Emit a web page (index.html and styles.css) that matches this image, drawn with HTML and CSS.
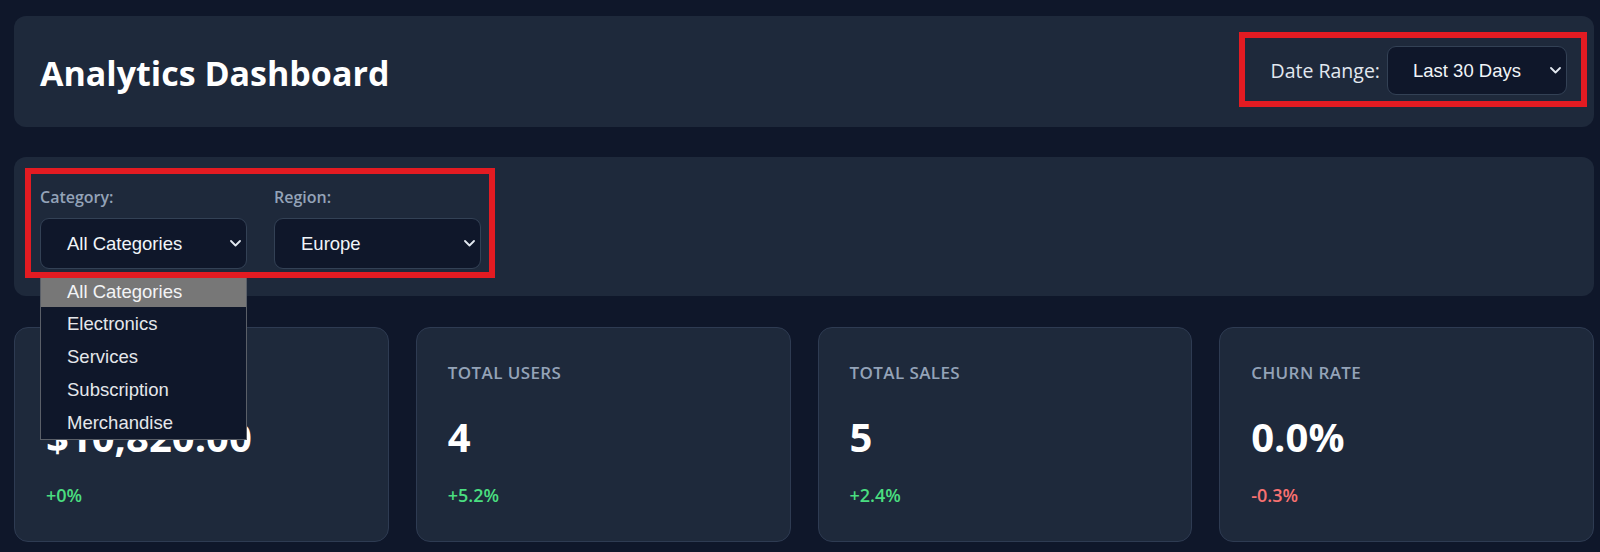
FILE: index.html
```html
<!DOCTYPE html>
<html lang="en">
<head>
<meta charset="utf-8">
<title>Analytics Dashboard</title>
<link rel="stylesheet" href="styles.css">
</head>
<body>
<div class="page">
  <header class="header">
    <h1 class="title">Analytics Dashboard</h1>
    <div class="date-box">
      <span class="date-label">Date Range:</span>
      <div class="select select-date">
        <span>Last 30 Days</span>
        <svg class="chev" width="11" height="7" viewBox="0 0 11 7"><polyline points="1,1 5.5,5.5 10,1" fill="none" stroke="#e2e8f0" stroke-width="1.8" stroke-linecap="round" stroke-linejoin="round"/></svg>
      </div>
    </div>
  </header>

  <section class="filters">
    <div class="filter-box">
      <div class="filter-group">
        <div class="filter-label">Category:</div>
        <div class="select select-filter">
          <span>All Categories</span>
          <svg class="chev" width="11" height="7" viewBox="0 0 11 7"><polyline points="1,1 5.5,5.5 10,1" fill="none" stroke="#e2e8f0" stroke-width="1.8" stroke-linecap="round" stroke-linejoin="round"/></svg>
        </div>
      </div>
      <div class="filter-group">
        <div class="filter-label">Region:</div>
        <div class="select select-filter">
          <span>Europe</span>
          <svg class="chev" width="11" height="7" viewBox="0 0 11 7"><polyline points="1,1 5.5,5.5 10,1" fill="none" stroke="#e2e8f0" stroke-width="1.8" stroke-linecap="round" stroke-linejoin="round"/></svg>
        </div>
      </div>
      <ul class="dropdown">
        <li class="opt opt-first active">All Categories</li>
        <li class="opt">Electronics</li>
        <li class="opt">Services</li>
        <li class="opt">Subscription</li>
        <li class="opt">Merchandise</li>
      </ul>
    </div>
  </section>

  <section class="cards">
    <div class="card">
      <div class="card-label">Total Revenue</div>
      <div class="card-value">$10,820.00</div>
      <div class="card-change up">+0%</div>
    </div>
    <div class="card">
      <div class="card-label">Total Users</div>
      <div class="card-value">4</div>
      <div class="card-change up">+5.2%</div>
    </div>
    <div class="card">
      <div class="card-label">Total Sales</div>
      <div class="card-value">5</div>
      <div class="card-change up">+2.4%</div>
    </div>
    <div class="card">
      <div class="card-label">Churn Rate</div>
      <div class="card-value">0.0%</div>
      <div class="card-change down">-0.3%</div>
    </div>
  </section>
</div>
</body>
</html>
```

FILE: styles.css
```css
* { box-sizing: border-box; }

html, body {
  margin: 0;
  padding: 0;
  background: #0f172a;
}

body {
  font-family: "Open Sans", "Noto Sans", sans-serif;
  color: #f8fafc;
  overflow: hidden;
}

.page {
  padding: 16px 6px 0 14px;
}

.header {
  height: 111px;
  background: #1e293b;
  border-radius: 12px;
  display: flex;
  align-items: center;
  justify-content: space-between;
  padding: 0 7px 0 26px;
}

.title {
  margin: 4px 0 0 0;
  font-size: 34px;
  font-weight: 700;
  color: #ffffff;
  line-height: 1.2;
}

.date-box {
  display: flex;
  align-items: center;
  gap: 7px;
  border: 6px solid #e31b22;
  padding: 8px 14px 6px 26px;
  margin-bottom: 4px;
}

.date-label {
  font-size: 19.5px;
  color: #e2e8f0;
}

.select {
  display: flex;
  align-items: center;
  justify-content: space-between;
  background: #0f172a;
  border: 1px solid #334155;
  border-radius: 9px;
  color: #f1f5f9;
  font-family: "Liberation Sans", Arial, sans-serif;
  font-size: 18.5px;
  padding: 0 5px 0 25px;
}

.select-date {
  width: 180px;
  height: 49px;
}

.select-filter {
  width: 207px;
  height: 51px;
  padding-left: 26px;
}

.chev { display: block; flex: none; }

.filters {
  margin-top: 30px;
  background: #1e293b;
  border-radius: 12px;
  padding: 11px 11px 18px 11px;
}

.filter-box {
  position: relative;
  display: inline-flex;
  gap: 27px;
  border: 6px solid #e31b22;
  padding: 12px 8px 3px 9px;
}

.filter-label {
  font-size: 16px;
  font-weight: 600;
  line-height: 22px;
  color: #94a3b8;
  margin-bottom: 10px;
}

.dropdown {
  position: absolute;
  top: calc(100% + 6px);
  left: 9px;
  width: 207px;
  margin: 0;
  padding: 0;
  list-style: none;
  background: #0f172a;
  border: 1px solid #5a5f68;
  border-top: none;
  z-index: 5;
  font-family: "Liberation Sans", Arial, sans-serif;
  font-size: 18.5px;
  color: #e5e7eb;
}

.opt {
  height: 33px;
  line-height: 33px;
  padding-left: 26px;
}

.opt-first {
  height: 29px;
  line-height: 27px;
}

.opt.active {
  background: #777777;
  color: #f3f4f6;
}

.cards {
  margin-top: 31px;
  display: grid;
  grid-template-columns: repeat(4, 1fr);
  gap: 27px;
}

.card {
  background: #1e293b;
  border: 1px solid #2e3b52;
  border-radius: 14px;
  padding: 33px 31px 33px;
}

.card-label {
  font-size: 17px;
  font-weight: 600;
  line-height: 1.4;
  text-transform: uppercase;
  letter-spacing: 0.4px;
  color: #94a3b8;
}

.card-value {
  margin-top: 28px;
  font-size: 40px;
  font-weight: 700;
  line-height: 1.2;
  color: #ffffff;
}

.card-change {
  margin-top: 22px;
  font-size: 18px;
  font-weight: 600;
  line-height: 1.4;
}

.card-change.up { color: #4ade80; }
.card-change.down { color: #f87171; }
```
